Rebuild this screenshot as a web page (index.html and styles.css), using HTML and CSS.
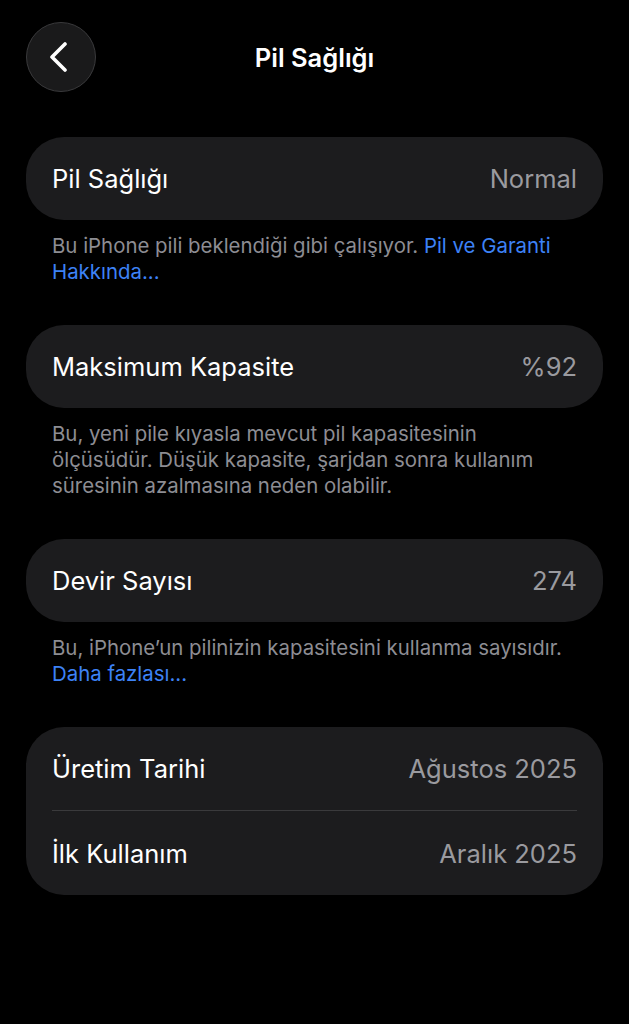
FILE: index.html
```html
<!DOCTYPE html>
<html lang="tr">
<head>
<meta charset="utf-8">
<title>Pil Sağlığı</title>
<link rel="stylesheet" href="styles.css">
</head>
<body>
<div class="screen">
  <header class="nav">
    <button class="back" aria-label="Geri">
      <svg width="20" height="30" viewBox="0 0 20 30"><path d="M16 2 L3 15 L16 28" fill="none" stroke="#fff" stroke-width="3.6" stroke-linecap="round" stroke-linejoin="round"/></svg>
    </button>
    <h1 class="title">Pil Sağlığı</h1>
    <span class="spacer"></span>
  </header>

  <main class="content">
    <section class="group">
      <div class="card">
        <div class="row"><span class="label">Pil Sağlığı</span><span class="value">Normal</span></div>
      </div>
      <p class="foot">Bu iPhone pili beklendiği gibi çalışıyor. <a class="link">Pil ve Garanti Hakkında...</a></p>
    </section>

    <section class="group">
      <div class="card">
        <div class="row"><span class="label">Maksimum Kapasite</span><span class="value">%92</span></div>
      </div>
      <p class="foot">Bu, yeni pile kıyasla mevcut pil kapasitesinin ölçüsüdür. Düşük kapasite, şarjdan sonra kullanım süresinin azalmasına neden olabilir.</p>
    </section>

    <section class="group">
      <div class="card">
        <div class="row"><span class="label">Devir Sayısı</span><span class="value">274</span></div>
      </div>
      <p class="foot">Bu, iPhone’un pilinizin kapasitesini kullanma sayısıdır. <a class="link">Daha fazlası...</a></p>
    </section>

    <section class="group">
      <div class="card">
        <div class="row"><span class="label">Üretim Tarihi</span><span class="value">Ağustos 2025</span></div>
        <div class="row"><span class="label">İlk Kullanım</span><span class="value">Aralık 2025</span></div>
      </div>
    </section>
  </main>
</div>
</body>
</html>
```

FILE: styles.css
```css
* { box-sizing: border-box; }
html, body {
  margin: 0;
  padding: 0;
  background: #000;
}
body {
  font-family: Inter, "Noto Sans", "Liberation Sans", sans-serif;
  color: #fff;
  -webkit-font-smoothing: antialiased;
}
.screen {
  width: 629px;
  min-height: 1024px;
  background: #000;
}
.nav {
  display: flex;
  align-items: center;
  justify-content: space-between;
  padding: 22px 26px 0 26px;
  height: 92px;
}
.back {
  width: 70px;
  height: 70px;
  border-radius: 50%;
  background: #1a1a1b;
  border: 1.5px solid #3a3a3c;
  display: flex;
  align-items: center;
  justify-content: center;
  padding: 0 4px 0 0;
  margin: 0;
}
.back svg { display: block; }
.title {
  margin: 0;
  font-size: 25.5px;
  font-weight: 600;
  letter-spacing: 0;
  color: #fff;
}
.spacer { width: 70px; height: 70px; }
.content {
  padding: 45px 26px 0 26px;
  display: flex;
  flex-direction: column;
  gap: 40px;
}
.card {
  background: #1c1c1e;
  border-radius: 38px;
  padding: 0 26px;
}
.row {
  display: flex;
  align-items: center;
  justify-content: space-between;
  height: 83px;
  font-size: 25.5px;
  letter-spacing: 0;
}
.row + .row {
  border-top: 1.5px solid #3a3a3c;
  height: 85px;
}
.label { color: #fff; }
.value { color: #9a9a9f; }
.foot {
  margin: 13px 26px 0 26px;
  font-size: 20.4px;
  line-height: 26px;
  letter-spacing: 0;
  color: #8d8d93;
}
.link { color: #3d82f6; }
```
